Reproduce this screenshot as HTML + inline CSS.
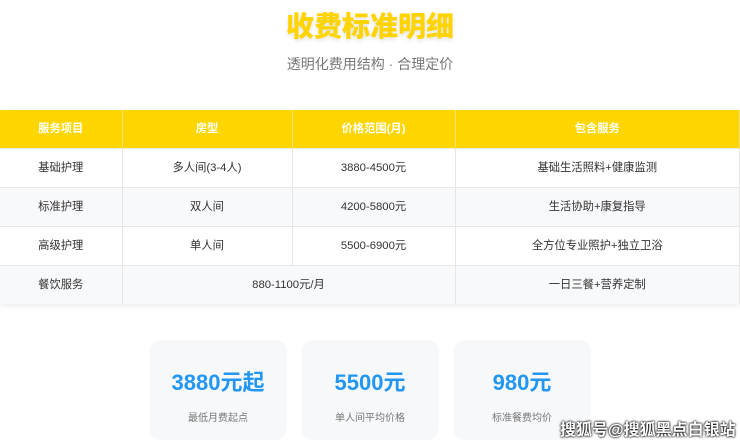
<!DOCTYPE html><html><head><meta charset="utf-8"><style>
body{margin:0;width:740px;height:442px;background:#fff;font-family:"Liberation Sans","Noto Sans CJK SC",sans-serif;position:relative;overflow:hidden}
h1{position:absolute;top:5px;left:0;width:740px;text-align:center;margin:0;font-size:28px;font-weight:900;color:#ffd400;text-shadow:0 2px 4px rgba(0,0,0,.12)}
.sub{position:absolute;top:54px;width:740px;text-align:center;font-size:14px;color:#777}
table{position:absolute;top:110px;left:0;width:740px;border-collapse:collapse;table-layout:fixed;font-size:11.3px;color:#333;box-shadow:0 2px 6px rgba(0,0,0,.08)}
th,td{padding:0;line-height:14px}
th{background:#ffd600;color:#fff;height:38px;font-weight:bold;border-right:1px solid #f0e080}
td{height:38px;text-align:center;border-top:1px solid #e6e6e6;border-right:1px solid #e6e6e6}
tr:nth-child(odd) td{background:#f8f9fb}
.card{position:absolute;top:340px;width:138px;height:100px;background:#f7f8fa;border-radius:12px;text-align:center}
.card b{display:block;margin-top:25px;font-size:22px;color:#2196f3}
.card span{display:block;margin-top:12px;font-size:10px;color:#777}
.wm{position:absolute;left:560px;top:416px;font-size:16px;color:#fff;font-weight:bold;text-shadow:0 0 2px #000,0 0 2px #000}
</style></head><body>
<h1>收费标准明细</h1>
<div class="sub">透明化费用结构 · 合理定价</div>
<table><colgroup><col style="width:122px"><col style="width:170px"><col style="width:163px"><col></colgroup>
<tr><th>服务项目</th><th>房型</th><th>价格范围(月)</th><th>包含服务</th></tr>
<tr><td>基础护理</td><td>多人间(3-4人)</td><td>3880-4500元</td><td>基础生活照料+健康监测</td></tr>
<tr><td>标准护理</td><td>双人间</td><td>4200-5800元</td><td>生活协助+康复指导</td></tr>
<tr><td>高级护理</td><td>单人间</td><td>5500-6900元</td><td>全方位专业照护+独立卫浴</td></tr>
<tr><td>餐饮服务</td><td colspan="2">880-1100元/月</td><td>一日三餐+营养定制</td></tr></table>
<div class="card" style="left:149px"><b>3880元起</b><span>最低月费起点</span></div>
<div class="card" style="left:301px"><b>5500元</b><span>单人间平均价格</span></div>
<div class="card" style="left:453px"><b>980元</b><span>标准餐费均价</span></div>
<div class="wm">搜狐号@搜狐黑点白银站</div>
</body></html>
